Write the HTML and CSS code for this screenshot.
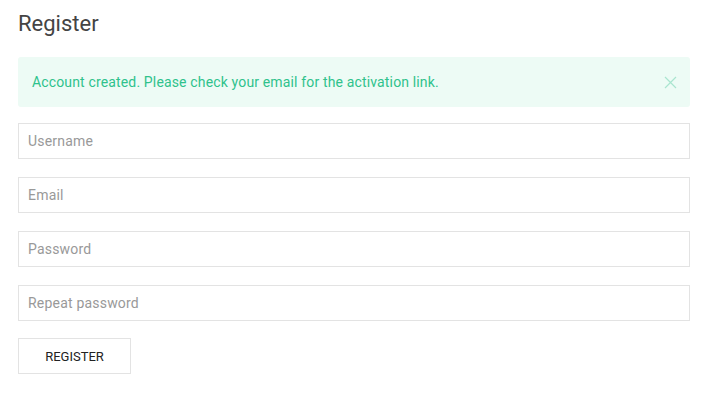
FILE: index.html
```html
<!DOCTYPE html>
<html lang="en">
<head>
  <meta charset="UTF-8">
  <meta name="viewport" content="width=device-width, initial-scale=1.0">
  <title>Register</title>
  <link rel="stylesheet" href="styles.css">
</head>
<body>
  <div class="page">
    <h2 class="title">Register</h2>

    <div class="alert">
      <span>Account created. Please check your email for the activation link.</span>
      <button class="alert-close" aria-label="Close">
        <svg width="13" height="13" viewBox="0 0 13 13">
          <path d="M1 1L12 12M12 1L1 12" stroke="#a9e5cf" stroke-width="1.2" fill="none"/>
        </svg>
      </button>
    </div>

    <form class="form">
      <input type="text" class="field" placeholder="Username">
      <input type="email" class="field" placeholder="Email">
      <input type="password" class="field" placeholder="Password">
      <input type="password" class="field" placeholder="Repeat password">
      <button type="button" class="btn">Register</button>
    </form>
  </div>
</body>
</html>
```

FILE: styles.css
```css
/* General */
body {
  margin: 0;
  font-family: Roboto, "Liberation Sans", sans-serif;
  background: #fff;
  color: #333;
}
.page {
  padding: 0 30px 0 18px;
}
.title {
  margin: 0;
  padding-top: 10px;
  font-size: 22px;
  font-weight: 400;
  line-height: 28px;
  color: #444;
}
/* Alert */
.alert {
  display: flex;
  align-items: center;
  justify-content: space-between;
  margin-top: 19px;
  height: 50px;
  padding: 0 13px 0 14px;
  background: #edfbf5;
  border-radius: 3px;
  color: #2fc28c;
  font-size: 14px;
  letter-spacing: 0.15px;
}
.alert-close {
  display: flex;
  padding: 0;
  border: none;
  background: none;
  cursor: pointer;
}
/* Form */
.form {
  display: flex;
  flex-direction: column;
  align-items: flex-start;
  gap: 18px;
  margin-top: 16px;
}
.field {
  box-sizing: border-box;
  width: 100%;
  height: 36px;
  padding: 0 9px;
  border: 1px solid #e3e3e3;
  font-family: inherit;
  font-size: 14px;
  letter-spacing: 0.2px;
  color: #333;
  outline: none;
}
.field::placeholder {
  color: #999;
}
.btn {
  box-sizing: border-box;
  width: 113px;
  height: 36px;
  margin-top: -1px;
  border: 1px solid #e3e3e3;
  background: #fff;
  font-family: inherit;
  font-size: 13px;
  text-transform: uppercase;
  color: #222;
  cursor: pointer;
}
```
